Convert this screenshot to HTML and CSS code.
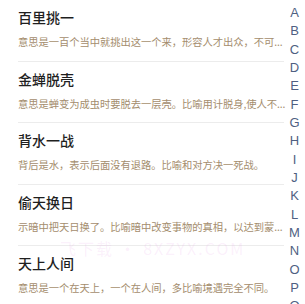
FILE: index.html
```html
<!DOCTYPE html>
<html lang="zh">
<head>
<meta charset="utf-8">
<link rel="stylesheet" href="styles.css">
</head>
<body>
<div class="page">
  <ul class="list">
    <li class="item">
      <div class="title">百里挑一</div>
      <div class="desc">意思是一百个当中就挑出这一个来，形容人才出众，不可...</div>
    </li>
    <li class="item">
      <div class="title">金蝉脱壳</div>
      <div class="desc">意思是蝉变为成虫时要脱去一层壳。比喻用计脱身,使人不...</div>
    </li>
    <li class="item">
      <div class="title">背水一战</div>
      <div class="desc">背后是水，表示后面没有退路。比喻和对方决一死战。</div>
    </li>
    <li class="item">
      <div class="title">偷天换日</div>
      <div class="desc">示暗中把天日换了。比喻暗中改变事物的真相，以达到蒙...</div>
    </li>
    <li class="item">
      <div class="title">天上人间</div>
      <div class="desc">意思是一个在天上，一个在人间，多比喻境遇完全不同。</div>
    </li>
  </ul>
  <ol class="index">
    <li>A</li><li>B</li><li>C</li><li>D</li><li>E</li><li>F</li><li>G</li><li>H</li>
    <li>I</li><li>J</li><li>K</li><li>L</li><li>M</li><li>N</li><li>O</li><li>P</li>
    <li>Q</li><li>R</li><li>S</li><li>T</li><li>U</li><li>V</li><li>W</li><li>X</li>
    <li>Y</li><li>Z</li>
  </ol>
  <div class="watermark">飞下载 · 8XZYX.COM</div>
</div>
</body>
</html>
```

FILE: styles.css
```css
html, body {
  margin: 0;
  padding: 0;
  background: #ffffff;
}
body {
  font-family: "Noto Sans CJK SC", "Noto Sans", sans-serif;
  width: 305px;
  height: 304px;
  overflow: hidden;
}
.page {
  position: relative;
  display: flex;
  height: 304px;
  overflow: hidden;
}
.list {
  list-style: none;
  margin: 0;
  padding: 0 0 0 18px;
  width: 266px;
  flex: none;
}
.item {
  display: flex;
  flex-direction: column;
  gap: 8px;
  padding: 8px 0 10.5px;
  border-bottom: 1px solid #ececec;
}
.item:last-child {
  border-bottom: none;
}
.title {
  font-size: 14px;
  line-height: 18px;
  font-weight: 500;
  color: #1f1f1f;
}
.desc {
  font-size: 10.3px;
  line-height: 16px;
  letter-spacing: -0.05px;
  color: #a48d6d;
  white-space: nowrap;
}
.index {
  list-style: none;
  margin: 0;
  padding: 4px 0 0;
  width: 21px;
  flex: none;
  display: flex;
  flex-direction: column;
  align-items: center;
}
.index li {
  font-family: "Liberation Sans", Arial, sans-serif;
  font-size: 13px;
  line-height: 18.33px;
  height: 18.33px;
  flex: none;
  color: #4f5f82;
}
.watermark {
  position: absolute;
  left: 60px;
  top: 236px;
  font-size: 16px;
  letter-spacing: 2px;
  color: rgba(230, 150, 230, 0.14);
  white-space: nowrap;
  pointer-events: none;
}
```
